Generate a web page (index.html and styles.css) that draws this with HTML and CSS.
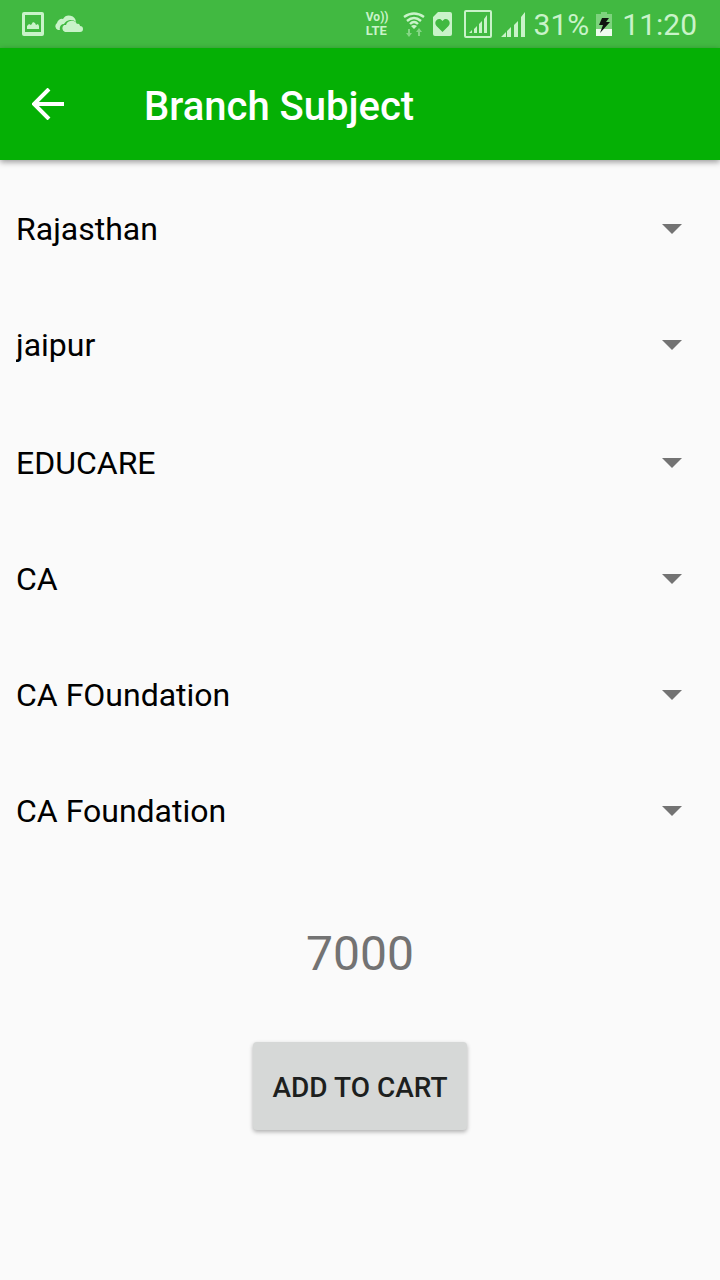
FILE: index.html
```html
<!DOCTYPE html>
<html lang="en">
<head>
<meta charset="utf-8">
<meta name="viewport" content="width=device-width, initial-scale=1">
<title>Branch Subject</title>
<link rel="stylesheet" href="styles.css">
</head>
<body>
<div class="status">
  <div class="status-left">
    <svg width="22" height="24" viewBox="0 0 22 24" aria-hidden="true"><path fill="currentColor" fill-rule="evenodd" d="M2 0h18q2 0 2 2v20q0 2-2 2H2q-2 0-2-2V2q0-2 2-2zM3 3v17h16V3z"/><path fill="currentColor" d="M5 17v-3l2-2 2 1 2-3 2 1 1 2 2-1 1 2v3z"/></svg>
    <svg width="29" height="18" viewBox="0 0 29 18" aria-hidden="true"><path fill="currentColor" d="M6 15H4a4 4 0 0 1-1-7 5 5 0 0 1 6-4 7 7 0 0 1 13 3 7 7 0 0 0-6-2 8 8 0 0 0-6 4c-3 0-5 3-4 6z"/><path fill="currentColor" d="M11 17a4 4 0 0 1-1-7h2a6 6 0 0 1 11-1c2-1 3 1 3 2a3 3 0 0 1 0 6z"/></svg>
  </div>
  <div class="status-right">
    <div class="volte"><span class="vo">Vo))</span><span class="lte">LTE</span></div>
    <svg class="wifi" width="22" height="25" viewBox="0 0 22 25" aria-hidden="true"><g fill="none" stroke="currentColor" stroke-width="2.400"><path d="M1 5q10-7 20 0M4 9q7-6 14 0M7 12q4-4 8 0"/></g><path fill="currentColor" d="M8 14q3-2 6 0l-3 3z"/><g fill="currentColor" opacity=".5"><path d="M5 17h2v4h2l-3 4-3-4h2zM15 24h2v-4h2l-3-4-3 4h2z"/></g></svg>
    <svg class="heart" width="19" height="24" viewBox="0 0 19 24" aria-hidden="true"><path fill="currentColor" fill-rule="evenodd" d="M5 0h12q2 0 2 2v20q0 2-2 2H2q-2 0-2-2V5zM9.500 20l6-6c4-5-3-10-6-5-3-5-10 0-6 5z"/></svg>
    <svg class="boxed" width="28" height="28" viewBox="0 0 28 28" aria-hidden="true"><rect x="1" y="1" width="26" height="26" rx="1" fill="none" stroke="currentColor" stroke-width="2"/><path fill="currentColor" d="M5 23l3-3v3zM10 19l3-3v7h-3zM15 14l3-3v12h-3zM20 9l3-4v18h-3z"/></svg>
    <svg class="signal" width="24" height="25" viewBox="0 0 24 25" aria-hidden="true"><path fill="currentColor" d="M0 25l5-5v5zM6 19l4-4v10H6zM13 13l4-4v16h-4zM20 5l4-5v25h-4z"/></svg>
    <span class="percent">31%</span>
    <svg class="battery" width="16" height="24" viewBox="0 0 16 24" aria-hidden="true"><path fill="currentColor" opacity=".45" d="M0 2h5V0h6v2h5v15H0z"/><path fill="#effcef" d="M0 17h16v7H0z"/><path fill="#101510" d="M6 6h7l-3 4h4L4 21l3-8H3z"/></svg>
    <span class="clock">11:20</span>
  </div>
</div>
<header class="appbar">
  <button class="back" type="button" aria-label="Back"><svg width="32" height="32" viewBox="0 0 32 32" aria-hidden="true"><path fill="none" stroke="currentColor" stroke-width="4" d="M32 16H3M17 1L2 16l15 15"/></svg></button>
  <h1 class="title">Branch Subject</h1>
</header>
<main>
  <form class="form">
    <div class="group">
      <div class="field"><select class="select" aria-label="State"><option>Rajasthan</option></select><svg class="caret" width="20" height="10" viewBox="0 0 20 10" aria-hidden="true"><path d="M0 0h20L10 10z"/></svg></div>
      <div class="field"><select class="select" aria-label="City"><option>jaipur</option></select><svg class="caret" width="20" height="10" viewBox="0 0 20 10" aria-hidden="true"><path d="M0 0h20L10 10z"/></svg></div>
    </div>
    <div class="group">
      <div class="field"><select class="select" aria-label="Branch"><option>EDUCARE</option></select><svg class="caret" width="20" height="10" viewBox="0 0 20 10" aria-hidden="true"><path d="M0 0h20L10 10z"/></svg></div>
      <div class="field"><select class="select" aria-label="Course"><option>CA</option></select><svg class="caret" width="20" height="10" viewBox="0 0 20 10" aria-hidden="true"><path d="M0 0h20L10 10z"/></svg></div>
      <div class="field"><select class="select" aria-label="Level"><option>CA FOundation</option></select><svg class="caret" width="20" height="10" viewBox="0 0 20 10" aria-hidden="true"><path d="M0 0h20L10 10z"/></svg></div>
      <div class="field"><select class="select" aria-label="Subject"><option>CA Foundation</option></select><svg class="caret" width="20" height="10" viewBox="0 0 20 10" aria-hidden="true"><path d="M0 0h20L10 10z"/></svg></div>
    </div>
    <output class="price">7000</output>
    <button class="add" type="button">ADD TO CART</button>
  </form>
</main>
</body>
</html>
```
FILE: styles.css
```css
* { box-sizing: border-box; }
body {
  margin: 0;
  min-height: 100vh;
  background: #fafafa;
  font-family: Roboto, "Liberation Sans", sans-serif;
}
svg { display: block; flex: none; }
.status {
  display: flex;
  justify-content: space-between;
  height: 48px;
  padding: 0 23px 0 22px;
  background: #41b941;
  color: #c9f3c9;
}
.status-left, .status-right { display: flex; align-items: center; }
.status-left { gap: 10px; }
.volte {
  display: flex;
  flex-direction: column;
  margin-right: 14px;
  font-weight: 700;
  line-height: 14px;
}
.vo { font-size: 12px; }
.lte { font-size: 13px; }
.wifi { margin-right: 8px; }
.heart { margin-right: 12px; }
.boxed { margin-right: 9px; }
.signal { margin-right: 9px; }
.percent, .clock {
  padding-top: 2px;
  font-size: 30px;
  font-weight: 400;
  line-height: 46px;
}
.percent { margin-right: 7px; }
.battery { margin-right: 10px; }
.appbar {
  display: flex;
  align-items: center;
  gap: 72px;
  height: 112px;
  padding: 0 24px;
  background: #05b005;
  color: #fff;
  box-shadow: 0 2px 6px rgba(0, 0, 0, .4);
}
.back {
  padding: 8px;
  border: 0;
  background: none;
  color: inherit;
}
.title {
  margin: 6px 0 0;
  font-size: 40px;
  font-weight: 500;
  line-height: 48px;
}
.form {
  display: flex;
  flex-direction: column;
  align-items: center;
  gap: 2px;
  padding: 11px 0;
}
.group { width: 100%; }
.field {
  display: grid;
  align-items: center;
  height: 116px;
  padding: 0 38px 0 16px;
}
.select, .caret { grid-area: 1 / 1; }
.select {
  appearance: none;
  width: 100%;
  height: 48px;
  padding: 0;
  border: 0;
  background: none;
  color: #000;
  font: 32px/48px Roboto, "Liberation Sans", sans-serif;
}
.caret {
  justify-self: end;
  fill: #737373;
  pointer-events: none;
}
.price {
  margin-top: 55px;
  color: #737373;
  font-size: 48px;
  line-height: 56px;
}
.add {
  height: 88px;
  margin-top: 58px;
  padding: 3px 20px 0;
  border: 0;
  border-radius: 4px;
  background: #d6d8d7;
  color: #1d1f1e;
  font: 500 28px/40px Roboto, "Liberation Sans", sans-serif;
  box-shadow: 0 2px 4px rgba(0, 0, 0, .3);
}
```
